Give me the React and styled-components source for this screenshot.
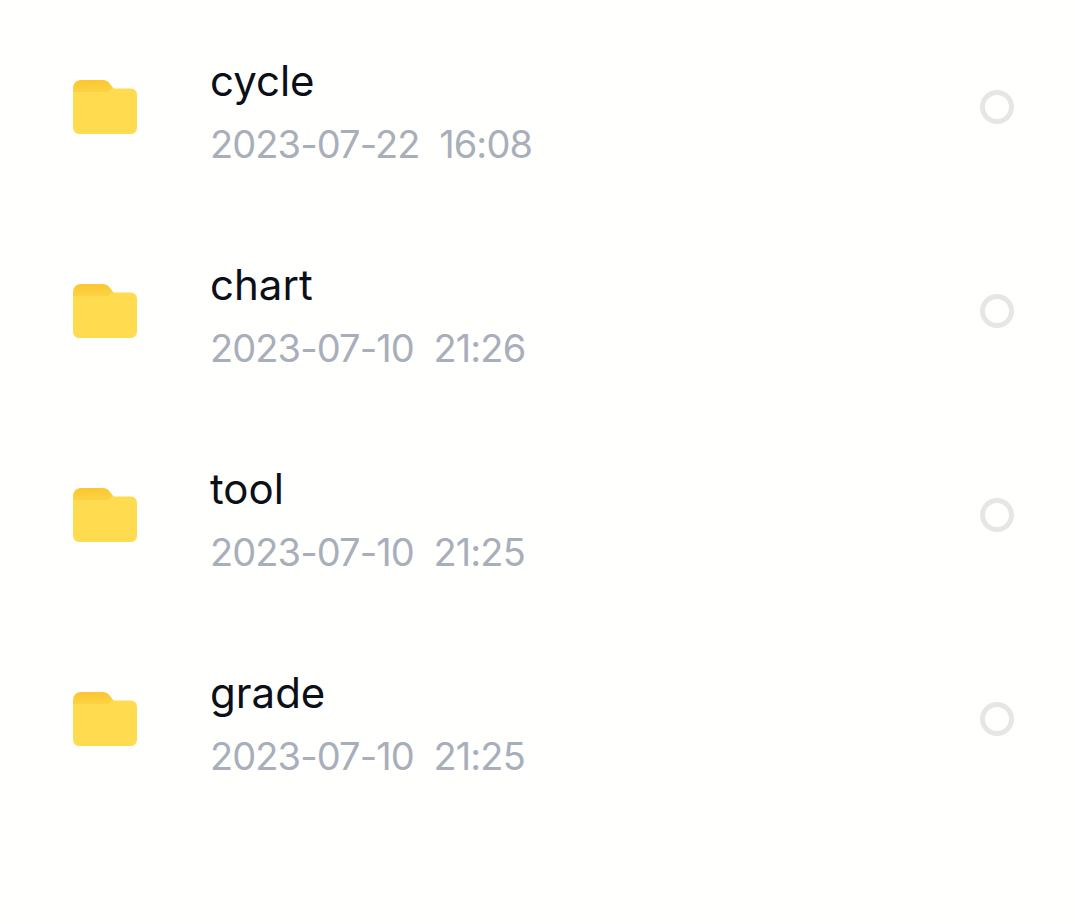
import React from "react";
import styled, { createGlobalStyle } from "styled-components";

const Global = createGlobalStyle`
  html, body { margin: 0; padding: 0; background: #fffffe; }
  body { font-family: Inter, "Noto Sans", sans-serif; }
`;

const Page = styled.main`
  width: 1075px;
  height: 924px;
  box-sizing: border-box;
  padding: 5px 61px 0 73px;
  overflow: hidden;
`;

const List = styled.ul`
  margin: 0;
  padding: 0;
  list-style: none;
`;

const Row = styled.li`
  height: 204px;
  display: flex;
  align-items: center;
`;

const FolderBox = styled.div`
  width: 64px;
  height: 56px;
  flex: none;
  margin-right: 73px;
`;

const Info = styled.div`
  flex: 1;
  display: flex;
  flex-direction: column;
  gap: 17px;
  padding-top: 9px;
`;

const Name = styled.div`
  font-size: 42px;
  line-height: 48px;
  color: #0b0f17;
`;

const Stamp = styled.div`
  font-size: 38px;
  line-height: 44px;
  letter-spacing: -0.9px;
  color: #a8afba;
  white-space: pre;
`;

const Radio = styled.div`
  width: 34px;
  height: 34px;
  box-sizing: border-box;
  flex: none;
  border: 5px solid #e6e6e6;
  border-radius: 50%;
`;

const Folder = () => (
  <FolderBox>
    <svg width="64" height="56" viewBox="0 0 64 56" aria-hidden="true">
      <defs>
        <linearGradient id="folderTab" x1="0" y1="0" x2="0" y2="1">
          <stop offset="0" stopColor="#fbc630" />
          <stop offset="1" stopColor="#fdd444" />
        </linearGradient>
      </defs>
      <path d="M0 9a8 8 0 0 1 8-8h21c4 0 6 1.500 8 4l4 5-3 4H0z" fill="url(#folderTab)" />
      <path d="M0 13h35l4-3.500h19a6 6 0 0 1 6 6V49a6 6 0 0 1-6 6H6a6 6 0 0 1-6-6z" fill="#ffdb50" />
    </svg>
  </FolderBox>
);

const rows = [
  ["cycle", "2023-07-22  16:08"],
  ["chart", "2023-07-10  21:26"],
  ["tool", "2023-07-10  21:25"],
  ["grade", "2023-07-10  21:25"],
];

export default function App() {
  return (
    <Page>
      <Global />
      <List>
        {rows.map(([name, stamp]) => (
          <Row key={name}>
            <Folder />
            <Info>
              <Name>{name}</Name>
              <Stamp>{stamp}</Stamp>
            </Info>
            <Radio />
          </Row>
        ))}
      </List>
    </Page>
  );
}
